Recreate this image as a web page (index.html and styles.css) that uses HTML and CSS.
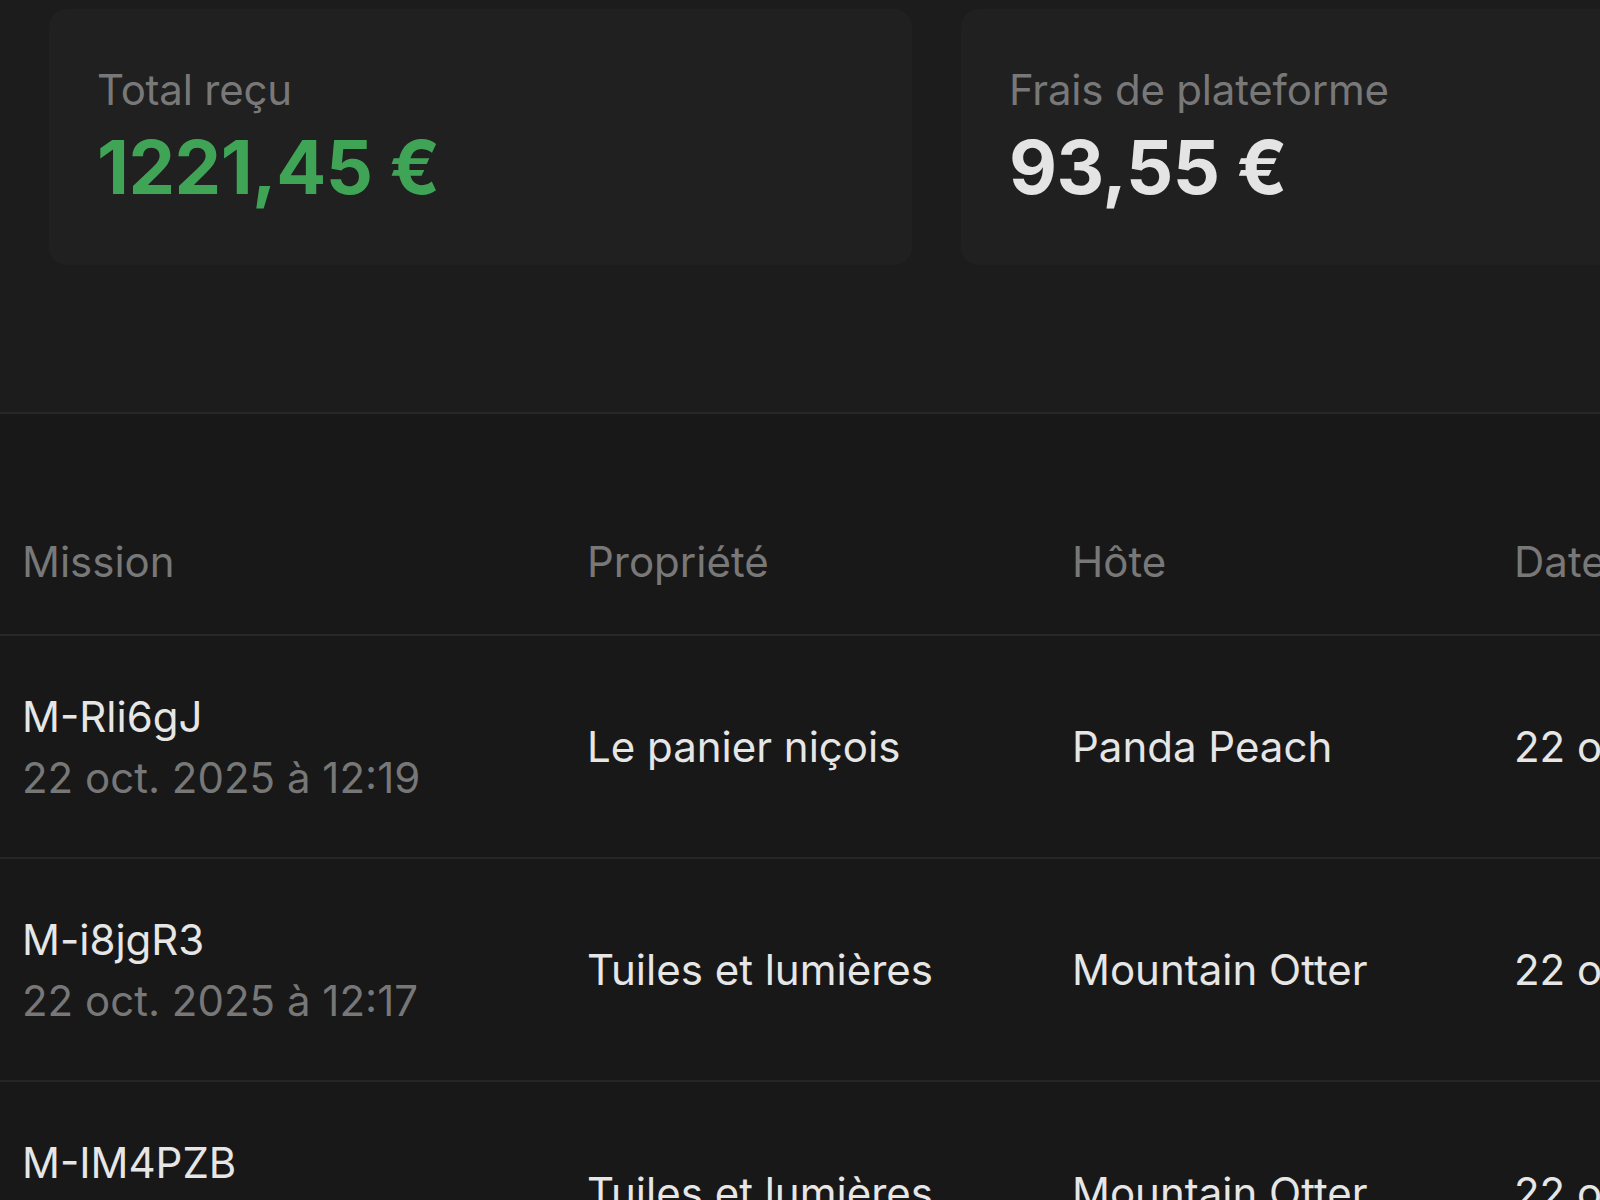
FILE: index.html
```html
<!DOCTYPE html>
<html lang="fr">
<head>
<meta charset="utf-8">
<title>Paiements</title>
<link rel="stylesheet" href="styles.css">
</head>
<body>
<div class="page">
  <section class="summary">
    <div class="card">
      <div class="card-label">Total reçu</div>
      <div class="card-value green">1221,45 €</div>
    </div>
    <div class="card">
      <div class="card-label">Frais de plateforme</div>
      <div class="card-value">93,55 €</div>
    </div>
  </section>
  <section class="table-section">
    <table class="missions">
      <colgroup>
        <col class="c-mission"><col class="c-prop"><col class="c-host"><col class="c-date">
      </colgroup>
      <thead>
        <tr><th>Mission</th><th>Propriété</th><th>Hôte</th><th>Date</th></tr>
      </thead>
      <tbody>
        <tr>
          <td><div class="mid">M-Rli6gJ</div><div class="sub">22 oct. 2025 à 12:19</div></td>
          <td>Le panier niçois</td>
          <td>Panda Peach</td>
          <td>22 oct. 2025</td>
        </tr>
        <tr>
          <td><div class="mid">M-i8jgR3</div><div class="sub">22 oct. 2025 à 12:17</div></td>
          <td>Tuiles et lumières</td>
          <td>Mountain Otter</td>
          <td>22 oct. 2025</td>
        </tr>
        <tr>
          <td><div class="mid">M-IM4PZB</div><div class="sub">22 oct. 2025 à 12:15</div></td>
          <td>Tuiles et lumières</td>
          <td>Mountain Otter</td>
          <td>22 oct. 2025</td>
        </tr>
      </tbody>
    </table>
  </section>
</div>
</body>
</html>
```

FILE: styles.css
```css
html, body {
  margin: 0;
  padding: 0;
  background: #181818;
  overflow: hidden;
}
body {
  font-family: Inter, "Noto Sans", sans-serif;
  color: #e6e6e6;
}
.page {
  width: 1600px;
  height: 1200px;
  overflow: hidden;
}
.summary {
  background: #1c1c1c;
  display: flex;
  gap: 49px;
  padding: 9px 0 0 49px;
  height: 414px;
  box-sizing: border-box;
  border-bottom: 2px solid #282828;
}
.card {
  flex: 0 0 863px;
  height: 256px;
  box-sizing: border-box;
  background: #202020;
  border-radius: 18px;
  padding: 55px 48px 0 48px;
}
.card-label {
  font-size: 42px;
  line-height: 52px;
  color: #787878;
  letter-spacing: -0.2px;
}
.card-value {
  font-size: 74px;
  line-height: 90px;
  margin-top: 6px;
  font-weight: 700;
  color: #e4e4e4;
  letter-spacing: -0.5px;
}
.card-value.green { color: #40a457; }

.table-section {
  padding-top: 75px;
}
.missions {
  border-collapse: collapse;
  table-layout: fixed;
  width: 1900px;
}
.c-mission { width: 565px; }
.c-prop { width: 485px; }
.c-host { width: 442px; }
.c-date { width: 408px; }
.missions th {
  text-align: left;
  font-weight: 400;
  color: #787878;
  font-size: 42px;
  height: 145px;
  padding: 0 0 0 22px;
  vertical-align: middle;
  border-bottom: 2px solid #282828;
}
.missions td {
  font-size: 42px;
  line-height: 61px;
  color: #e6e6e6;
  padding: 0 0 0 22px;
  height: 223px;
  box-sizing: border-box;
  vertical-align: middle;
  border-bottom: 2px solid #262626;
  white-space: nowrap;
}
.missions .sub { color: #777777; }
```
